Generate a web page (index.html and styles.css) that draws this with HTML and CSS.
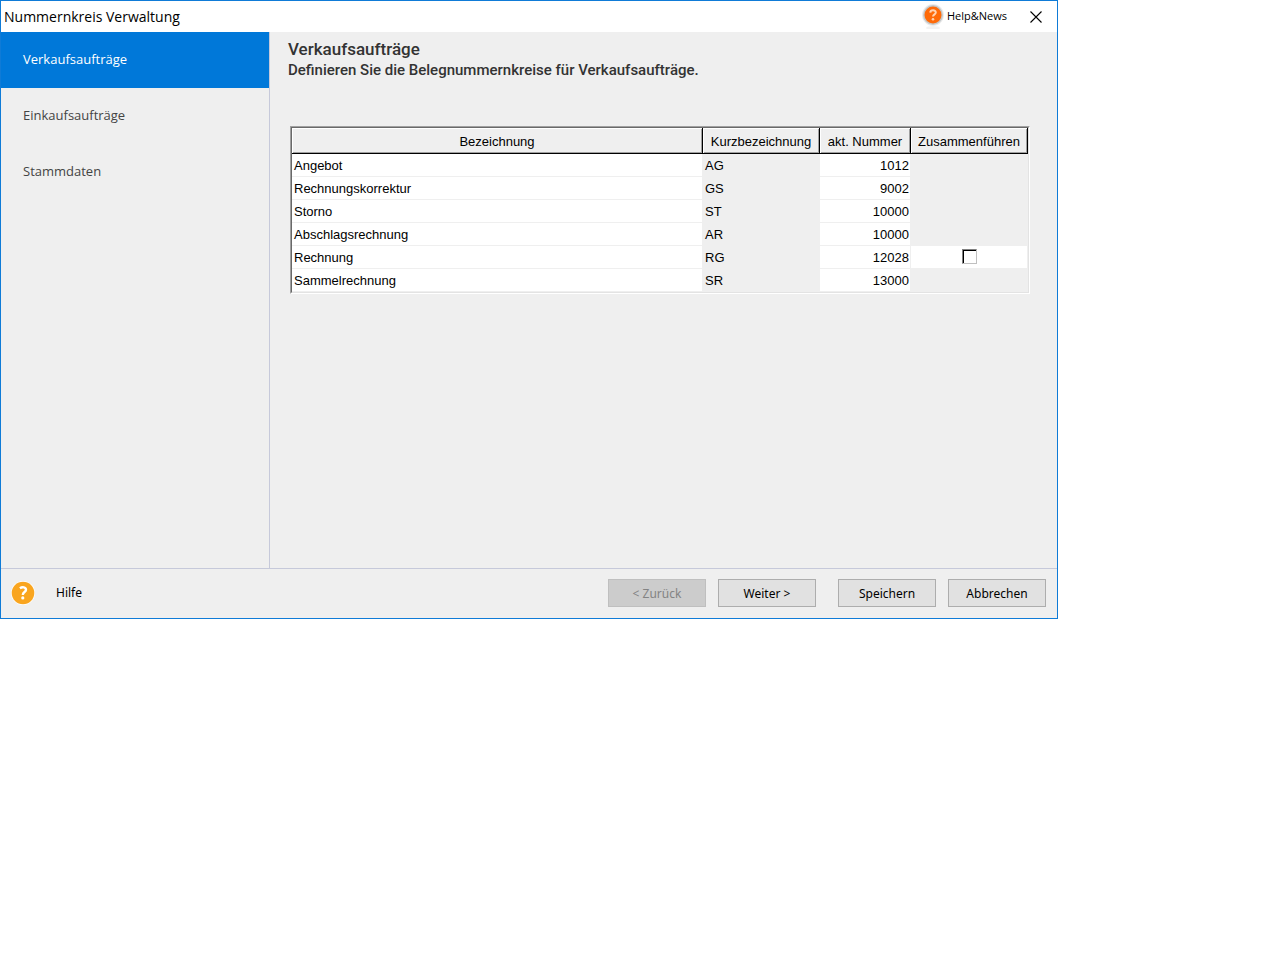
FILE: index.html
```html
<!DOCTYPE html>
<html lang="de">
<head>
    <meta charset="UTF-8">
    <meta name="viewport" content="width=device-width, initial-scale=1.0">
    <title>Nummernkreis Verwaltung</title>
    <link rel="stylesheet" href="styles.css">
</head>
<body>
    <div class="dialog">
        <header class="titlebar">
            <span class="title">Nummernkreis Verwaltung</span>
            <a class="help-news" href="#">
                <svg width="24" height="26" viewBox="0 0 24 26" aria-hidden="true">
                    <ellipse cx="12" cy="25" rx="7" ry="2" fill="#f3f3f3"/>
                    <circle cx="12" cy="12" r="11" fill="#ececec"/>
                    <circle cx="12" cy="12" r="10" fill="#c4c8ca"/>
                    <circle cx="12" cy="12" r="8.5" fill="#ff6a08"/>
                    <path d="M9.3 9.6C9.4 6.6 14.8 6.5 14.8 9.5C14.8 11.4 12 11.3 12 13.6" fill="none" stroke="#ffd3b3" stroke-width="2"/>
                    <circle cx="12" cy="16.3" r="1.3" fill="#ffd3b3"/>
                </svg>
                <span>Help&amp;News</span>
            </a>
            <button class="close" type="button" aria-label="Schließen">
                <svg width="12" height="12" viewBox="0 0 12 12" aria-hidden="true">
                    <path d="M0.5 0.5L11.5 11.5M11.5 0.5L0.5 11.5" stroke="#000" stroke-width="1.1"/>
                </svg>
            </button>
        </header>

        <div class="body">
            <nav class="sidebar">
                <a class="active" href="#">Verkaufsaufträge</a>
                <a href="#">Einkaufsaufträge</a>
                <a href="#">Stammdaten</a>
            </nav>

            <main class="content">
                <h1>Verkaufsaufträge</h1>
                <p>Definieren Sie die Belegnummernkreise für Verkaufsaufträge.</p>

                <div class="grid">
                    <table>
                        <thead>
                            <tr>
                                <th class="name">Bezeichnung</th>
                                <th class="short">Kurzbezeichnung</th>
                                <th class="number">akt. Nummer</th>
                                <th class="merge">Zusammenführen</th>
                            </tr>
                        </thead>
                        <tbody>
                            <tr><td>Angebot</td><td class="locked">AG</td><td class="num">1012</td><td class="locked"></td></tr>
                            <tr><td>Rechnungskorrektur</td><td class="locked">GS</td><td class="num">9002</td><td class="locked"></td></tr>
                            <tr><td>Storno</td><td class="locked">ST</td><td class="num">10000</td><td class="locked"></td></tr>
                            <tr><td>Abschlagsrechnung</td><td class="locked">AR</td><td class="num">10000</td><td class="locked"></td></tr>
                            <tr><td>Rechnung</td><td class="locked">RG</td><td class="num">12028</td><td class="check"><input type="checkbox" aria-label="Rechnung zusammenführen"></td></tr>
                            <tr><td>Sammelrechnung</td><td class="locked">SR</td><td class="num">13000</td><td class="locked"></td></tr>
                        </tbody>
                    </table>
                </div>
            </main>
        </div>

        <footer class="footer">
            <a class="help" href="#">
                <svg width="24" height="24" viewBox="0 0 24 24" aria-hidden="true">
                    <circle cx="12" cy="12" r="12" fill="#fff"/>
                    <circle cx="12" cy="12" r="11.3" fill="#f9a51f"/>
                    <path d="M8.9 7.3C11.2 5.7 15 6 15 8.8C15 11.2 11.8 11 11.8 13.9" fill="none" stroke="#fff" stroke-width="2.4"/>
                    <circle cx="11.8" cy="16.9" r="1.6" fill="#fff"/>
                </svg>
                <span>Hilfe</span>
            </a>
            <div class="buttons">
                <button type="button" disabled>&lt; Zurück</button>
                <button type="button">Weiter &gt;</button>
            </div>
            <div class="buttons">
                <button type="button">Speichern</button>
                <button type="button">Abbrechen</button>
            </div>
        </footer>
    </div>
</body>
</html>
```
FILE: styles.css
```css
* {
    box-sizing: border-box;
}

body {
    margin: 0;
    background: #fff;
    color: #000;
    font-family: "Open Sans", "Noto Sans", sans-serif;
    font-size: 13px;
}

a {
    color: inherit;
    text-decoration: none;
}

.dialog {
    display: flex;
    flex-direction: column;
    margin-right: 222px;
    min-height: calc(100vh - 355px);
    border: 1px solid #0f7bd7;
    background: #efefef;
}

/* Titelleiste */
.titlebar {
    display: flex;
    align-items: center;
    height: 31px;
    padding: 0 15px 0 3px;
    background: #fff;
}

.title {
    flex: 1;
    font-size: 14px;
}

.help-news {
    display: flex;
    align-items: center;
    gap: 2px;
    margin-right: 23px;
    padding-bottom: 2px;
    font-size: 11px;
}

.close {
    display: flex;
    padding: 0;
    border: 0;
    background: none;
}

.body {
    display: flex;
    flex: 1;
}

/* Navigation links */
.sidebar {
    width: 269px;
    border-right: 1px solid #c6c9da;
    color: #444;
}

.sidebar a {
    display: flex;
    align-items: center;
    height: 56px;
    padding: 0 0 2px 22px;
}

.sidebar .active {
    background: #0078d9;
    color: #fff;
}

.content {
    flex: 1;
    padding: 7px 27px 20px 18px;
    color: #333;
    font-family: Roboto, sans-serif;
}

.content h1 {
    margin: 0;
    font-size: 17px;
    font-weight: 500;
    line-height: 20px;
}

.content p {
    margin: 0;
    font-size: 15px;
    font-weight: 500;
    line-height: 22px;
}

/* Tabelle */
.grid {
    margin: 45px 0 0 2px;
    border: 1px solid #fff;
    border-top-color: #a0a0a0;
    border-left-color: #a0a0a0;
    color: #000;
    font-family: "Liberation Sans", Arial, sans-serif;
    font-size: 13px;
}

table {
    width: 100%;
    border: 1px solid #e3e3e3;
    border-top-color: #696969;
    border-left-color: #696969;
    border-spacing: 0;
    table-layout: fixed;
}

th {
    height: 26px;
    padding: 2px 0 0;
    border-right: 1px solid #000;
    border-bottom: 1px solid #000;
    background: #efefef;
    box-shadow: inset 1px 1px #fff, inset -1px -1px #a0a0a0;
    font-weight: normal;
}

.short {
    width: 117px;
}

.number {
    width: 91px;
}

.merge {
    width: 117px;
}

td {
    height: 23px;
    padding: 0 2px;
    border-right: 1px solid #efefef;
    border-bottom: 1px solid #efefef;
    background: #fff;
}

.locked {
    background: #efefef;
}

.num {
    padding-right: 1px;
    text-align: right;
}

.check {
    padding-bottom: 2px;
    line-height: 0;
    text-align: center;
}

.check input {
    appearance: none;
    width: 15px;
    height: 15px;
    margin: 0;
    border: 1px solid #c0c0c0;
    border-top-color: #808080;
    border-left-color: #808080;
    background: #fff;
    box-shadow: inset 1px 1px #000;
}

.check input:checked {
    background: #000;
}

/* Fußzeile */
.footer {
    display: flex;
    align-items: center;
    gap: 22px;
    height: 50px;
    padding: 0 11px 2px 10px;
    border-top: 1px solid #c6c9da;
    font-family: "Noto Sans", "Open Sans", sans-serif;
    font-size: 12px;
}

.help {
    display: flex;
    align-items: center;
    gap: 21px;
    margin-right: auto;
}

.buttons {
    display: flex;
    gap: 12px;
}

.buttons button {
    width: 98px;
    height: 28px;
    padding: 2px 0 0;
    border: 1px solid #adadad;
    background: #e1e1e1;
    color: #000;
    font: inherit;
}

.buttons button:disabled {
    border-color: #bfbfbf;
    background: #ccc;
    color: #838383;
}
```
